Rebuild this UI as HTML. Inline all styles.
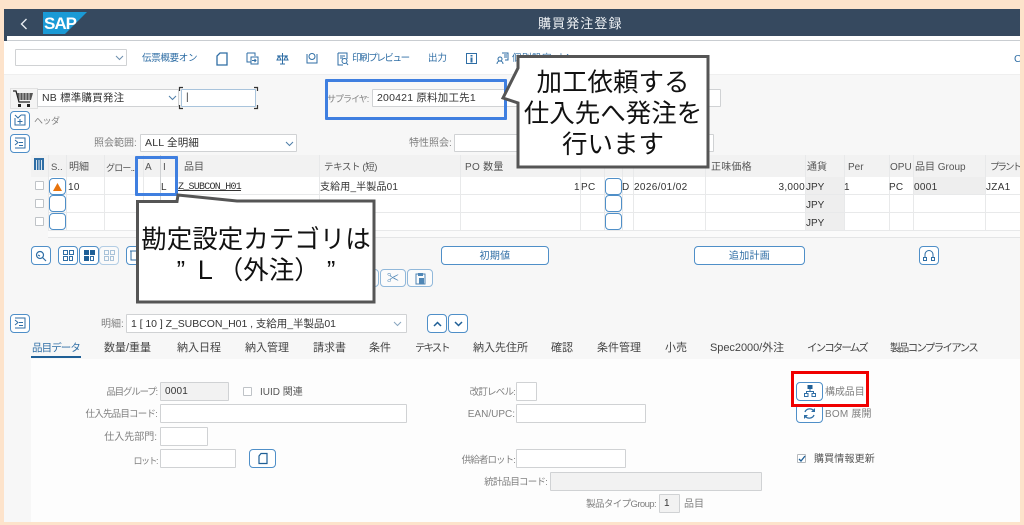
<!DOCTYPE html>
<html lang="ja"><head><meta charset="utf-8"><title>購買発注登録</title>
<style>
*{box-sizing:border-box}
html,body{margin:0;padding:0;width:1024px;height:525px;overflow:hidden;background:#fde3cb}
body{position:relative;font-family:"Liberation Sans","Noto Sans CJK JP",sans-serif;font-size:10px;color:#333;filter:blur(.3px)}
.a,.t,.i,.b,.c,.s{position:absolute}
.t{white-space:nowrap;line-height:14px;height:14px;margin-top:1px}
.x{margin-top:2px}
.l{color:#808080}
.r{text-align:right}
.i{background:#fff;border:1px solid #d0d2d4;border-radius:1px;padding:0 4px;line-height:15px;white-space:nowrap;color:#333}
.d{background:#f2f2f2}
.b{background:#fff;border:1px solid #4f8fc8;border-radius:4px}
.blue{color:#2f6ea5}
.c{width:9px;height:9px;border:1px solid #bfc3c7;background:#fff;border-radius:1px}
.v{position:absolute;width:1px;background:#e8e9ea}
.h{position:absolute;height:1px;background:#e8e9ea}
.tab{position:absolute;top:341px;line-height:14px;font-size:11px;color:#444;white-space:nowrap}
svg{position:absolute;overflow:visible}
.call{position:absolute;color:#111;text-align:center;font-size:25.500px;white-space:nowrap}
</style></head><body>

<div class="a" style="left:4px;top:9px;width:1016px;height:27px;background:#36495f"></div>
<div class="a" style="left:4px;top:36px;width:3px;height:5px;background:#36495f"></div>
<div class="a" style="left:7px;top:36px;width:1013px;height:5px;background:#fff;border-bottom:1px solid #c9cdd1"></div>
<div class="a" style="left:4px;top:41px;width:1016px;height:34px;background:#fff;border-bottom:1px solid #efefef"></div>
<div class="a" style="left:4px;top:75px;width:1016px;height:447px;background:#f7f7f7"></div>
<div class="a" style="left:31px;top:359px;width:989px;height:163px;background:#fdfdfd"></div>

<svg style="left:19px;top:17px" width="10" height="14" viewBox="0 0 10 14"><path d="M7.500 2 2.500 7l5 5" fill="none" stroke="#e8edf2" stroke-width="1.400"/></svg>
<svg style="left:43px;top:12px" width="45" height="22" viewBox="0 0 45 22"><path d="M0 0H44L22 22H0Z" fill="#1a9ad6"/></svg>
<div class="t" style="left:44px;top:14px;font-size:17px;font-weight:bold;color:#fff;line-height:18px;height:18px;letter-spacing:-1px">SAP</div>
<div class="t" style="left:538px;top:16px;font-size:13px;color:#eef1f4;letter-spacing:1.100px">購買発注登録</div>

<div class="i" style="left:15px;top:49px;width:112px;height:17px"></div>
<svg style="left:115px;top:55px" width="9" height="6"><path d="M1 1l3.500 3.500L8 1" fill="none" stroke="#6d8fae"/></svg>
<div class="t blue" style="left:142px;top:51px;font-size:9.500px;letter-spacing:-.3px">伝票概要オン</div>
<svg style="left:216px;top:52px" width="12" height="14" viewBox="0 0 12 14"><path d="M4 1h7v12H1V4z" fill="none" stroke="#2f6ea5" stroke-width="1.300"/></svg>
<svg style="left:246px;top:52px" width="13" height="13" viewBox="0 0 13 13"><path d="M1 1h8v3M1 1v9h4M5 5h7v7H5zM6 8.500h4M8.500 7l1.500 1.500L8.500 10" fill="none" stroke="#2f6ea5"/></svg>
<svg style="left:276px;top:52px" width="13" height="13" viewBox="0 0 13 13"><path d="M6.500 1v11M1 4h11M3 4 1 8h4zM10 4 8 8h4zM4 12h5" fill="none" stroke="#2f6ea5"/></svg>
<svg style="left:306px;top:52px" width="12" height="13" viewBox="0 0 12 13"><circle cx="6" cy="4.500" r="3" fill="none" stroke="#2f6ea5"/><path d="M1 2v9h10V2" fill="none" stroke="#2f6ea5"/></svg>
<svg style="left:337px;top:52px" width="12" height="14" viewBox="0 0 12 14"><path d="M1 1h9v6M1 1v12h5M3 4h5M3 6h3" fill="none" stroke="#2f6ea5"/><circle cx="7.500" cy="9" r="2.500" fill="none" stroke="#2f6ea5"/><path d="M9.500 11 11 13" stroke="#2f6ea5"/></svg>
<div class="t blue" style="left:352px;top:51px;font-size:9.500px;letter-spacing:-1.400px">印刷プレビュー</div>
<div class="t blue" style="left:428px;top:51px;font-size:9.500px">出力</div>
<svg style="left:466px;top:53px" width="11" height="11" viewBox="0 0 11 11"><rect x=".5" y=".5" width="10" height="10" fill="none" stroke="#2f6ea5"/><path d="M5.500 2v1.500M5.500 4.500v5" stroke="#2f6ea5" stroke-width="2"/></svg>
<svg style="left:496px;top:52px" width="13" height="13" viewBox="0 0 13 13"><circle cx="4" cy="7" r="2" fill="none" stroke="#2f6ea5"/><path d="M1 12c0-4 6-4 6 0M6 1h6v7H9M8 3h3M8 5h3" fill="none" stroke="#2f6ea5"/></svg>
<div class="t blue" style="left:512px;top:51px;font-size:9.500px;letter-spacing:.5px">個別設定 オン</div>
<div class="t blue" style="left:1014px;top:51px;font-size:10.500px">C</div>

<div class="a" style="left:10px;top:88px;width:28px;height:21px;background:#f4f4f4;border:1px solid #e2e2e2"></div>
<svg style="left:13px;top:90px" width="22" height="19" viewBox="0 0 22 19"><path d="M0 1h3l3 11h11" fill="none" stroke="#222" stroke-width="1.300"/><path d="M4 3h16l-2 7H6z" fill="#555"/><path d="M7 3v7M10 3v7M13 3v7M16 3v7" stroke="#eee" stroke-width=".8"/><rect x="5" y="14" width="3" height="3" fill="#222"/><rect x="14" y="14" width="3" height="3" fill="#222"/></svg>
<div class="i" style="left:37px;top:89px;width:142px;height:18px;line-height:17px;font-size:10.500px;letter-spacing:.2px">NB 標準購買発注</div>
<svg style="left:168px;top:95px" width="9" height="6"><path d="M1 1l3.500 3.500L8 1" fill="none" stroke="#4f7ea8"/></svg>
<div class="i" style="left:181px;top:89px;width:75px;height:18px;border-color:#a9c4dc;line-height:16px">|</div>
<svg style="left:179px;top:87px" width="79" height="22"><path d="M.5 4V.5H4M75 .5h3.500V4M.5 18v3.500H4M75 21.500h3.500V18" fill="none" stroke="#333" stroke-width="1.200"/></svg>

<div class="b" style="left:10px;top:111px;width:20px;height:19px"></div>
<svg style="left:14px;top:114px" width="12" height="12" viewBox="0 0 12 12"><path d="M1 1l3 3 3-3M1 4v7h10V1H7M6 5v5M3.500 7.500h5" fill="none" stroke="#2f6ea5"/></svg>
<div class="t l" style="left:34px;top:113px;font-size:9px;letter-spacing:-.5px">ヘッダ</div>

<div class="t l" style="left:327px;top:91px;font-size:9px;letter-spacing:-1px">サプライヤ:</div>
<div class="i" style="left:372px;top:89px;width:150px;height:18px;line-height:17px;font-size:10.500px;letter-spacing:.2px">200421 原料加工先1</div>
<div class="i" style="left:692px;top:89px;width:29px;height:18px"></div>

<div class="b" style="left:10px;top:134px;width:20px;height:19px"></div>
<svg style="left:14px;top:137px" width="12" height="12" viewBox="0 0 12 12"><path d="M1 1h10v10H1M1 3l3 2.500L1 8M5 5.500h4M5 8.500h4" fill="none" stroke="#2f6ea5"/></svg>
<div class="t l" style="left:94px;top:136px;font-size:10px">照会範囲:</div>
<div class="i" style="left:140px;top:134px;width:157px;height:18px;line-height:17px;font-size:10.500px;letter-spacing:.2px">ALL 全明細</div>
<svg style="left:285px;top:141px" width="9" height="6"><path d="M1 1l3.500 3.500L8 1" fill="none" stroke="#4f7ea8"/></svg>
<div class="t l" style="left:409px;top:136px;font-size:10px">特性照会:</div>
<div class="i" style="left:454px;top:134px;width:260px;height:18px"></div>

<!-- table -->
<div class="a" style="left:31px;top:155px;width:989px;height:83px;background:#fff"></div>
<div class="a" style="left:31px;top:155px;width:989px;height:22px;background:#f2f2f2"></div>
<div class="a" style="left:31px;top:230px;width:989px;height:8px;background:#fbfbfb;border-bottom:1px solid #e4e5e6"></div>
<div class="a" style="left:31px;top:177px;width:17px;height:61px;background:#f7f7f7"></div>
<div class="a" style="left:805px;top:177px;width:39px;height:53px;background:#eeeeee"></div>
<div class="a" style="left:913px;top:177px;width:72px;height:18px;background:#eeeeee"></div>
<div class="h" style="left:48px;top:194px;width:972px"></div>
<div class="h" style="left:48px;top:212px;width:972px"></div>
<div class="h" style="left:48px;top:230px;width:972px"></div>
<div class="v" style="left:48px;top:155px;height:75px"></div>
<div class="v" style="left:66px;top:155px;height:75px"></div>
<div class="v" style="left:104px;top:155px;height:75px"></div>
<div class="v" style="left:143px;top:155px;height:75px"></div>
<div class="v" style="left:160px;top:155px;height:75px;background:#cfd1d3"></div>
<div class="v" style="left:177px;top:155px;height:75px"></div>
<div class="v" style="left:319px;top:155px;height:75px"></div>
<div class="v" style="left:460px;top:155px;height:75px"></div>
<div class="v" style="left:580px;top:155px;height:75px"></div>
<div class="v" style="left:604px;top:155px;height:75px"></div>
<div class="v" style="left:622px;top:155px;height:75px"></div>
<div class="v" style="left:633px;top:155px;height:75px"></div>
<div class="v" style="left:705px;top:155px;height:75px"></div>
<div class="v" style="left:805px;top:155px;height:75px"></div>
<div class="v" style="left:844px;top:155px;height:75px"></div>
<div class="v" style="left:889px;top:155px;height:75px"></div>
<div class="v" style="left:913px;top:155px;height:75px"></div>
<div class="v" style="left:985px;top:155px;height:75px"></div>

<svg style="left:33px;top:158px" width="12" height="12" viewBox="0 0 12 12"><rect x="1" y="0" width="10" height="12" fill="#2f6ea5"/><path d="M3.500 2v10M6 2v10M8.500 2v10" stroke="#dbe6ef"/></svg>
<div class="t x" style="left:51px;top:159px;color:#555;font-size:9.500px">S..</div>
<div class="t x" style="left:69px;top:159px;color:#555">明細</div>
<div class="t x" style="left:106px;top:159px;color:#555;font-size:9px;letter-spacing:-.8px">グロー...</div>
<div class="t x" style="left:145px;top:159px;color:#555">A</div>
<div class="t x" style="left:163px;top:159px;color:#555">I</div>
<div class="t x" style="left:184px;top:159px;color:#555">品目</div>
<div class="t x" style="left:324px;top:159px;color:#555;font-size:9.500px;letter-spacing:-.4px">テキスト (短)</div>
<div class="t x" style="left:465px;top:159px;color:#555;letter-spacing:.3px">PO 数量</div>
<div class="t x" style="left:711px;top:159px;color:#555;letter-spacing:.2px">正味価格</div>
<div class="t x" style="left:807px;top:159px;color:#555">通貨</div>
<div class="t x" style="left:848px;top:159px;color:#555">Per</div>
<div class="t x" style="left:890px;top:159px;color:#555">OPU</div>
<div class="t x" style="left:915px;top:159px;color:#555">品目 Group</div>
<div class="t x" style="left:990px;top:159px;color:#555;font-size:9.500px;letter-spacing:-2px">プラント</div>

<div class="c" style="left:35px;top:181px"></div>
<div class="c" style="left:35px;top:199px"></div>
<div class="c" style="left:35px;top:217px"></div>
<div class="b" style="left:49px;top:178px;width:17px;height:17px"></div>
<div class="b" style="left:49px;top:195px;width:17px;height:17px"></div>
<div class="b" style="left:49px;top:213px;width:17px;height:17px"></div>
<svg style="left:53px;top:182px" width="9" height="9"><path d="M4.500 1 9 9H0z" fill="#e8730c"/></svg>
<div class="t x" style="left:68px;top:179px;letter-spacing:.3px">10</div>
<div class="t x" style="left:161px;top:179px">L</div>
<div class="t x" style="left:178px;top:179px;font-family:'Liberation Mono','Noto Sans CJK JP',monospace;text-decoration:underline;font-size:10px;letter-spacing:-.75px">Z_SUBCON_H01</div>
<div class="t x" style="left:320px;top:179px;letter-spacing:.15px">支給用_半製品01</div>
<div class="t x" style="left:574px;top:179px">1</div>
<div class="t x" style="left:581px;top:179px;letter-spacing:.3px">PC</div>
<div class="b" style="left:605px;top:178px;width:17px;height:17px"></div>
<div class="b" style="left:605px;top:195px;width:17px;height:17px"></div>
<div class="b" style="left:605px;top:213px;width:17px;height:17px"></div>
<div class="t x" style="left:622px;top:179px">D</div>
<div class="t x" style="left:634px;top:179px;letter-spacing:.35px">2026/01/02</div>
<div class="t r x" style="left:745px;top:179px;width:60px;letter-spacing:.3px">3,000</div>
<div class="t x" style="left:806px;top:179px">JPY</div>
<div class="t x" style="left:806px;top:197px">JPY</div>
<div class="t x" style="left:806px;top:215px">JPY</div>
<div class="t x" style="left:844px;top:179px">1</div>
<div class="t x" style="left:889px;top:179px;letter-spacing:.2px">PC</div>
<div class="t x" style="left:914px;top:179px;letter-spacing:.3px">0001</div>
<div class="t x" style="left:986px;top:179px;letter-spacing:.3px">JZA1</div>

<!-- buttons under table -->
<div class="b" style="left:31px;top:246px;width:20px;height:19px"></div>
<svg style="left:35px;top:250px" width="12" height="12" viewBox="0 0 12 12"><circle cx="5" cy="5" r="3.500" fill="none" stroke="#2f6ea5" stroke-width="1.200"/><path d="M7.500 7.500 11 11M3 5l2 1" stroke="#2f6ea5" stroke-width="1.200"/></svg>
<div class="b" style="left:58px;top:246px;width:20px;height:19px"></div>
<div class="b" style="left:79px;top:246px;width:20px;height:19px"></div>
<div class="b" style="left:99px;top:246px;width:20px;height:19px;opacity:.4"></div>
<svg style="left:63px;top:250px" width="11" height="11" viewBox="0 0 11 11"><path d="M.5.5h4v4h-4zM6.500.5h4v4h-4zM.5 6.500h4v4h-4zM6.500 6.500h3v4h-3z" fill="none" stroke="#2f6ea5"/></svg>
<svg style="left:84px;top:250px" width="11" height="11" viewBox="0 0 11 11"><path d="M0 0h5v5H0zM6 0h5v5H6zM0 6h5v5H0z" fill="#1f5f96"/><path d="M6.500 6.500h3v4h-3z" fill="none" stroke="#2f6ea5"/></svg>
<svg style="left:104px;top:250px;opacity:.4" width="11" height="11" viewBox="0 0 11 11"><path d="M.5.5h4v4h-4zM6.500.5h4v4h-4zM.5 6.500h4v4h-4zM6.500 6.500h3v4h-3z" fill="none" stroke="#2f6ea5"/></svg>
<div class="b" style="left:126px;top:246px;width:14px;height:19px"></div>
<svg style="left:130px;top:250px" width="6" height="11"><path d="M0 1h6M1 1v9h5" fill="none" stroke="#2f6ea5"/></svg>
<div class="b" style="left:441px;top:246px;width:108px;height:19px"></div>
<div class="t blue" style="left:441px;top:249px;width:108px;text-align:center;letter-spacing:.3px">初期値</div>
<div class="b" style="left:694px;top:246px;width:111px;height:19px"></div>
<div class="t blue" style="left:694px;top:249px;width:111px;text-align:center;letter-spacing:.3px">追加計画</div>
<div class="b" style="left:919px;top:246px;width:20px;height:19px"></div>
<svg style="left:923px;top:250px" width="12" height="11" viewBox="0 0 12 11"><path d="M2 7V4.500a4 4 0 0 1 8 0V7" fill="none" stroke="#2f6ea5"/><path d="M.5 7.500h3v3h-3zM8.500 7.500h3v3h-3z" fill="none" stroke="#2f6ea5"/></svg>
<div class="b" style="left:360px;top:269px;width:19px;height:18px;opacity:.6"></div>
<div class="b" style="left:380px;top:269px;width:26px;height:18px;opacity:.6"></div>
<div class="b" style="left:407px;top:269px;width:26px;height:18px;opacity:.6"></div>
<div class="t" style="left:387px;top:270px;font-size:12px;color:#4f86b5">✂</div>
<svg style="left:415px;top:272px" width="11" height="13" viewBox="0 0 11 13"><path d="M1 2h9v10H1z" fill="none" stroke="#4f86b5"/><path d="M3 1h5v3H3zM4 6h5v6H4z" fill="#4f86b5"/></svg>

<!-- detail -->
<div class="b" style="left:10px;top:314px;width:20px;height:19px"></div>
<svg style="left:14px;top:317px" width="12" height="12" viewBox="0 0 12 12"><path d="M1 1h10v10H1M1 3l3 2.500L1 8M5 5.500h4M5 8.500h4" fill="none" stroke="#2f6ea5"/></svg>
<div class="t l" style="left:101px;top:317px;font-size:10px">明細:</div>
<div class="i" style="left:126px;top:314px;width:281px;height:19px;line-height:18px;font-size:10.500px;letter-spacing:-.05px">1 [ 10 ] Z_SUBCON_H01 , 支給用_半製品01</div>
<svg style="left:393px;top:321px" width="9" height="6"><path d="M1 1l3.500 3.500L8 1" fill="none" stroke="#8aa7c0"/></svg>
<div class="b" style="left:427px;top:314px;width:20px;height:19px"></div>
<div class="b" style="left:448px;top:314px;width:20px;height:19px"></div>
<svg style="left:433px;top:321px" width="9" height="6"><path d="M1 5l3.500-3.500L8 5" fill="none" stroke="#1f5f96" stroke-width="1.500"/></svg>
<svg style="left:454px;top:321px" width="9" height="6"><path d="M1 1l3.500 3.500L8 1" fill="none" stroke="#1f5f96" stroke-width="1.500"/></svg>

<div class="tab" style="left:32px;color:#2f6ea5;font-size:10.500px;letter-spacing:-.9px">品目データ</div>
<div class="a" style="left:31px;top:356px;width:50px;height:2px;background:#1f5f96"></div>
<div class="tab" style="left:104px">数量/重量</div>
<div class="tab" style="left:177px">納入日程</div>
<div class="tab" style="left:245px">納入管理</div>
<div class="tab" style="left:313px">請求書</div>
<div class="tab" style="left:369px">条件</div>
<div class="tab" style="left:415px;font-size:10.500px;letter-spacing:-2px">テキスト</div>
<div class="tab" style="left:473px">納入先住所</div>
<div class="tab" style="left:551px">確認</div>
<div class="tab" style="left:597px">条件管理</div>
<div class="tab" style="left:665px">小売</div>
<div class="tab" style="left:710px;letter-spacing:-.05px">Spec2000/外注</div>
<div class="tab" style="left:807px;font-size:10.500px;letter-spacing:-1.900px">インコタームズ</div>
<div class="tab" style="left:890px;font-size:10.500px;letter-spacing:-1.700px">製品コンプライアンス</div>

<div class="t l r" style="left:60px;top:385px;width:97px;letter-spacing:-1.200px;font-size:9.500px">品目グループ:</div>
<div class="i d" style="left:160px;top:382px;width:69px;height:19px;line-height:18px;letter-spacing:.2px">0001</div>
<div class="c" style="left:243px;top:387px"></div>
<div class="t" style="left:260px;top:385px;color:#555">IUID 関連</div>
<div class="t l r" style="left:40px;top:407px;width:117px;letter-spacing:-.8px;font-size:9.500px">仕入先品目コード:</div>
<div class="i" style="left:160px;top:404px;width:247px;height:19px"></div>
<div class="t l r" style="left:60px;top:430px;width:97px">仕入先部門:</div>
<div class="i" style="left:160px;top:427px;width:48px;height:19px"></div>
<div class="t l r" style="left:60px;top:453px;width:97px;font-size:9px;letter-spacing:-1.500px">ロット:</div>
<div class="i" style="left:160px;top:449px;width:76px;height:19px"></div>
<div class="b" style="left:249px;top:449px;width:27px;height:19px"></div>
<svg style="left:258px;top:453px" width="10" height="11" viewBox="0 0 10 11"><path d="M3 .5h6v10H1V3z" fill="none" stroke="#1f5f96" stroke-width="1.200"/></svg>

<div class="t l r" style="left:440px;top:385px;width:75px;font-size:9.500px;letter-spacing:-.8px">改訂レベル:</div>
<div class="i" style="left:516px;top:382px;width:21px;height:19px"></div>
<div class="t l r" style="left:440px;top:407px;width:75px">EAN/UPC:</div>
<div class="i" style="left:516px;top:404px;width:130px;height:19px"></div>
<div class="t l r" style="left:440px;top:453px;width:75px;font-size:9.500px;letter-spacing:-.9px">供給者ロット:</div>
<div class="i" style="left:516px;top:449px;width:110px;height:19px"></div>
<div class="t l r" style="left:440px;top:475px;width:107px;font-size:9.500px;letter-spacing:-.8px">統計品目コード:</div>
<div class="i d" style="left:550px;top:472px;width:212px;height:19px"></div>
<div class="t l r" style="left:560px;top:497px;width:96px;font-size:9.500px;letter-spacing:-.6px">製品タイプGroup:</div>
<div class="i d" style="left:659px;top:494px;width:21px;height:19px;line-height:18px">1</div>
<div class="t l" style="left:684px;top:497px">品目</div>

<div class="b" style="left:796px;top:404px;width:27px;height:19px"></div>
<svg style="left:803px;top:407px" width="13" height="13" viewBox="0 0 13 13"><path d="M2 5a5 4.500 0 0 1 9-1M11 8a5 4.500 0 0 1-9 1" fill="none" stroke="#2f6ea5" stroke-width="1.300"/><path d="M12 1v4H8zM1 12V8h4z" fill="#2f6ea5"/></svg>
<div class="t l" style="left:825px;top:407px;letter-spacing:.2px">BOM 展開</div>
<div class="a" style="left:791px;top:371px;width:78px;height:36px;background:#fff;border:3px solid #f00000"></div>
<div class="b" style="left:796px;top:382px;width:27px;height:19px"></div>
<svg style="left:804px;top:385px" width="12" height="12" viewBox="0 0 12 12"><rect x="3.500" y="0" width="5" height="4" fill="#1f5f96"/><path d="M6 4v2.500M2.500 8.500v-2h7v2" fill="none" stroke="#2f6ea5"/><path d="M.5 8.500h3.500v3H.5zM8 8.500h3.500v3H8z" fill="none" stroke="#2f6ea5"/></svg>
<div class="t l" style="left:825px;top:385px;letter-spacing:-.1px">構成品目</div>
<div class="c" style="left:797px;top:454px;border-color:#b5b9bd"></div>
<svg style="left:798px;top:455px" width="9" height="8"><path d="M1 4l2 2 4-5" fill="none" stroke="#1f5f96" stroke-width="1.300"/></svg>
<div class="t" style="left:814px;top:452px;color:#555;letter-spacing:.15px">購買情報更新</div>

<!-- annotations -->
<div class="a" style="left:325px;top:79px;width:182px;height:41px;border:3px solid #3f7fe0;border-radius:1px"></div>
<div class="a" style="left:135px;top:156px;width:43px;height:40px;border:3px solid #3f7fe0;border-radius:1px"></div>
<svg style="left:0;top:0" width="1024" height="525"><path d="M518 56.500H708V167H518V103L503 98 518 68Z" fill="#fff" stroke="#555" stroke-width="3" stroke-linejoin="miter"/><path d="M137.500 201.500H177L178 195 237 201H374V302H137.500Z" fill="#fff" stroke="#555" stroke-width="3" stroke-linejoin="miter"/></svg>
<div class="call" style="left:518px;top:68px;width:190px;line-height:31px">加工依頼する<br>仕入先へ発注を<br>行います</div>
<div class="call" style="left:137px;top:225px;width:238px;line-height:31px">勘定設定カテゴリは<br>” Ｌ（外注） ”</div>
<div class="a" style="left:1020px;top:0;width:4px;height:525px;background:#fde3cb"></div>
</body></html>
